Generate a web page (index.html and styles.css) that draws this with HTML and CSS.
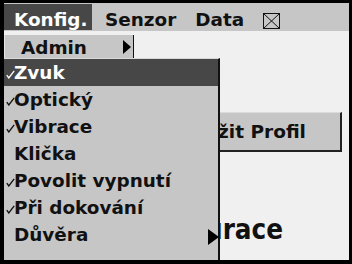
FILE: index.html
```html
<!DOCTYPE html>
<html>
<head>
<meta charset="utf-8">
<link rel="stylesheet" href="styles.css">
</head>
<body>
<div class="screen">
  <div class="menubar">
    <span class="mi mi-active">Konfig.</span>
    <span class="mi mi-senzor">Senzor</span>
    <span class="mi mi-data">Data</span>
    <span class="mi mi-close"><svg width="17" height="16" viewBox="0 0 17 16"><rect x="0.5" y="0.5" width="16" height="15" fill="none" stroke="#111" stroke-width="1"/><path d="M1 1 L16 15 M16 1 L1 15" stroke="#111" stroke-width="1" fill="none"/></svg></span>
  </div>
  <div class="content">
    <div class="btn">Uložit Profil</div>
    <div class="title">Konfigurace</div>
  </div>
  <div class="menu1">
    <span class="label">Admin</span>
    <span class="tri"></span>
  </div>
  <div class="menu2">
    <div class="row row-sel"><span class="chk"><svg width="9" height="9" viewBox="0 0 9 9"><path d="M0.8 5.2 L2.8 8 L8.2 0.8" fill="none" stroke="currentColor" stroke-width="1.3"/></svg></span><span>Zvuk</span></div>
    <div class="row"><span class="chk"><svg width="9" height="9" viewBox="0 0 9 9"><path d="M0.8 5.2 L2.8 8 L8.2 0.8" fill="none" stroke="currentColor" stroke-width="1.3"/></svg></span><span>Optický</span></div>
    <div class="row"><span class="chk"><svg width="9" height="9" viewBox="0 0 9 9"><path d="M0.8 5.2 L2.8 8 L8.2 0.8" fill="none" stroke="currentColor" stroke-width="1.3"/></svg></span><span>Vibrace</span></div>
    <div class="row"><span class="chk"></span><span>Klička</span></div>
    <div class="row"><span class="chk"><svg width="9" height="9" viewBox="0 0 9 9"><path d="M0.8 5.2 L2.8 8 L8.2 0.8" fill="none" stroke="currentColor" stroke-width="1.3"/></svg></span><span>Povolit vypnutí</span></div>
    <div class="row"><span class="chk"><svg width="9" height="9" viewBox="0 0 9 9"><path d="M0.8 5.2 L2.8 8 L8.2 0.8" fill="none" stroke="currentColor" stroke-width="1.3"/></svg></span><span>Při dokování</span></div>
    <div class="row row-sub"><span class="chk"></span><span class="grow">Důvěra</span><span class="tri tri-big"></span></div>
  </div>
</div>
</body>
</html>
```

FILE: styles.css
```css
* { box-sizing: border-box; }
html, body { margin: 0; padding: 0; background: #000; }
body { font-family: "DejaVu Sans", "Verdana", sans-serif; font-weight: bold; color: #111; }

.screen {
  position: relative;
  width: 352px;
  height: 264px;
  border-style: solid;
  border-color: #000;
  border-width: 3px 3px 4px 4px;
  background: #f0f0f0;
  display: flex;
  flex-direction: column;
  overflow: hidden;
}

.menubar {
  height: 28px;
  background: #c6c6c6;
  display: flex;
  align-items: flex-start;
  padding: 1px 0;
  font-size: 18.4px;
  flex: none;
}
.mi {
  height: 26px;
  padding-top: 6px;
  line-height: 20px;
  white-space: nowrap;
}
.mi-active {
  width: 88px;
  padding-left: 10px;
  background: #474747;
  color: #fff;
}
.mi-senzor { margin-left: 13px; }
.mi-data { margin-left: 19px; }
.mi-close { margin-left: 19px; padding-top: 9px; display: flex; align-items: flex-start; }

.content {
  flex: 1;
  display: flex;
  flex-direction: column;
}
.btn {
  align-self: flex-end;
  margin-top: 81px;
  margin-right: 7px;
  width: 193px;
  height: 40px;
  background: #c6c6c6;
  border-top: 1px solid #dcdcdc;
  border-left: 1px solid #dcdcdc;
  border-right: 2px solid #222;
  border-bottom: 2px solid #222;
  font-size: 18.5px;
  line-height: 37px;
  text-align: center;
  color: #111;
}
.title {
  align-self: flex-end;
  margin-top: 62px;
  margin-right: 66px;
  font-family: "DejaVu Sans Condensed", "DejaVu Sans", sans-serif;
  font-stretch: condensed;
  font-size: 27.5px;
  line-height: 30px;
  color: #111;
}

.menu1 {
  position: absolute;
  left: 0;
  top: 32px;
  width: 130px;
  height: 23px;
  background: #c6c6c6;
  border-left: 1px solid #e6e6e6;
  border-right: 1px solid #111;
  display: flex;
  align-items: center;
  justify-content: space-between;
  padding-left: 16px;
  padding-right: 2px;
  font-size: 18.4px;
}
.menu1 .label { line-height: 20px; padding-top: 3px; }
.tri {
  width: 0;
  height: 0;
  border-left: 8px solid #000;
  border-top: 7px solid transparent;
  border-bottom: 7px solid transparent;
}

.menu2 {
  position: absolute;
  left: 0;
  top: 55px;
  bottom: 0;
  width: 216px;
  background: #c6c6c6;
  border-top: 1px solid #d8d8d8;
  border-right: 2px solid #111;
  font-size: 18.4px;
}
.row {
  height: 27px;
  line-height: 27px;
  display: flex;
  align-items: baseline;
  white-space: nowrap;
}
.row-sel { background: #474747; color: #fff; }
.chk {
  width: 10px;
  flex: none;
  align-self: flex-start;
  padding-left: 2px;
  margin-top: 11px;
  height: 9px;
}
.chk svg { display: block; }
.grow { flex: 1; }
.row-sub { position: relative; }
.tri-big {
  align-self: center;
  margin-top: 4px;
  margin-right: -1px;
  border-left: 11px solid #000;
  border-top: 8px solid transparent;
  border-bottom: 8px solid transparent;
}
```
